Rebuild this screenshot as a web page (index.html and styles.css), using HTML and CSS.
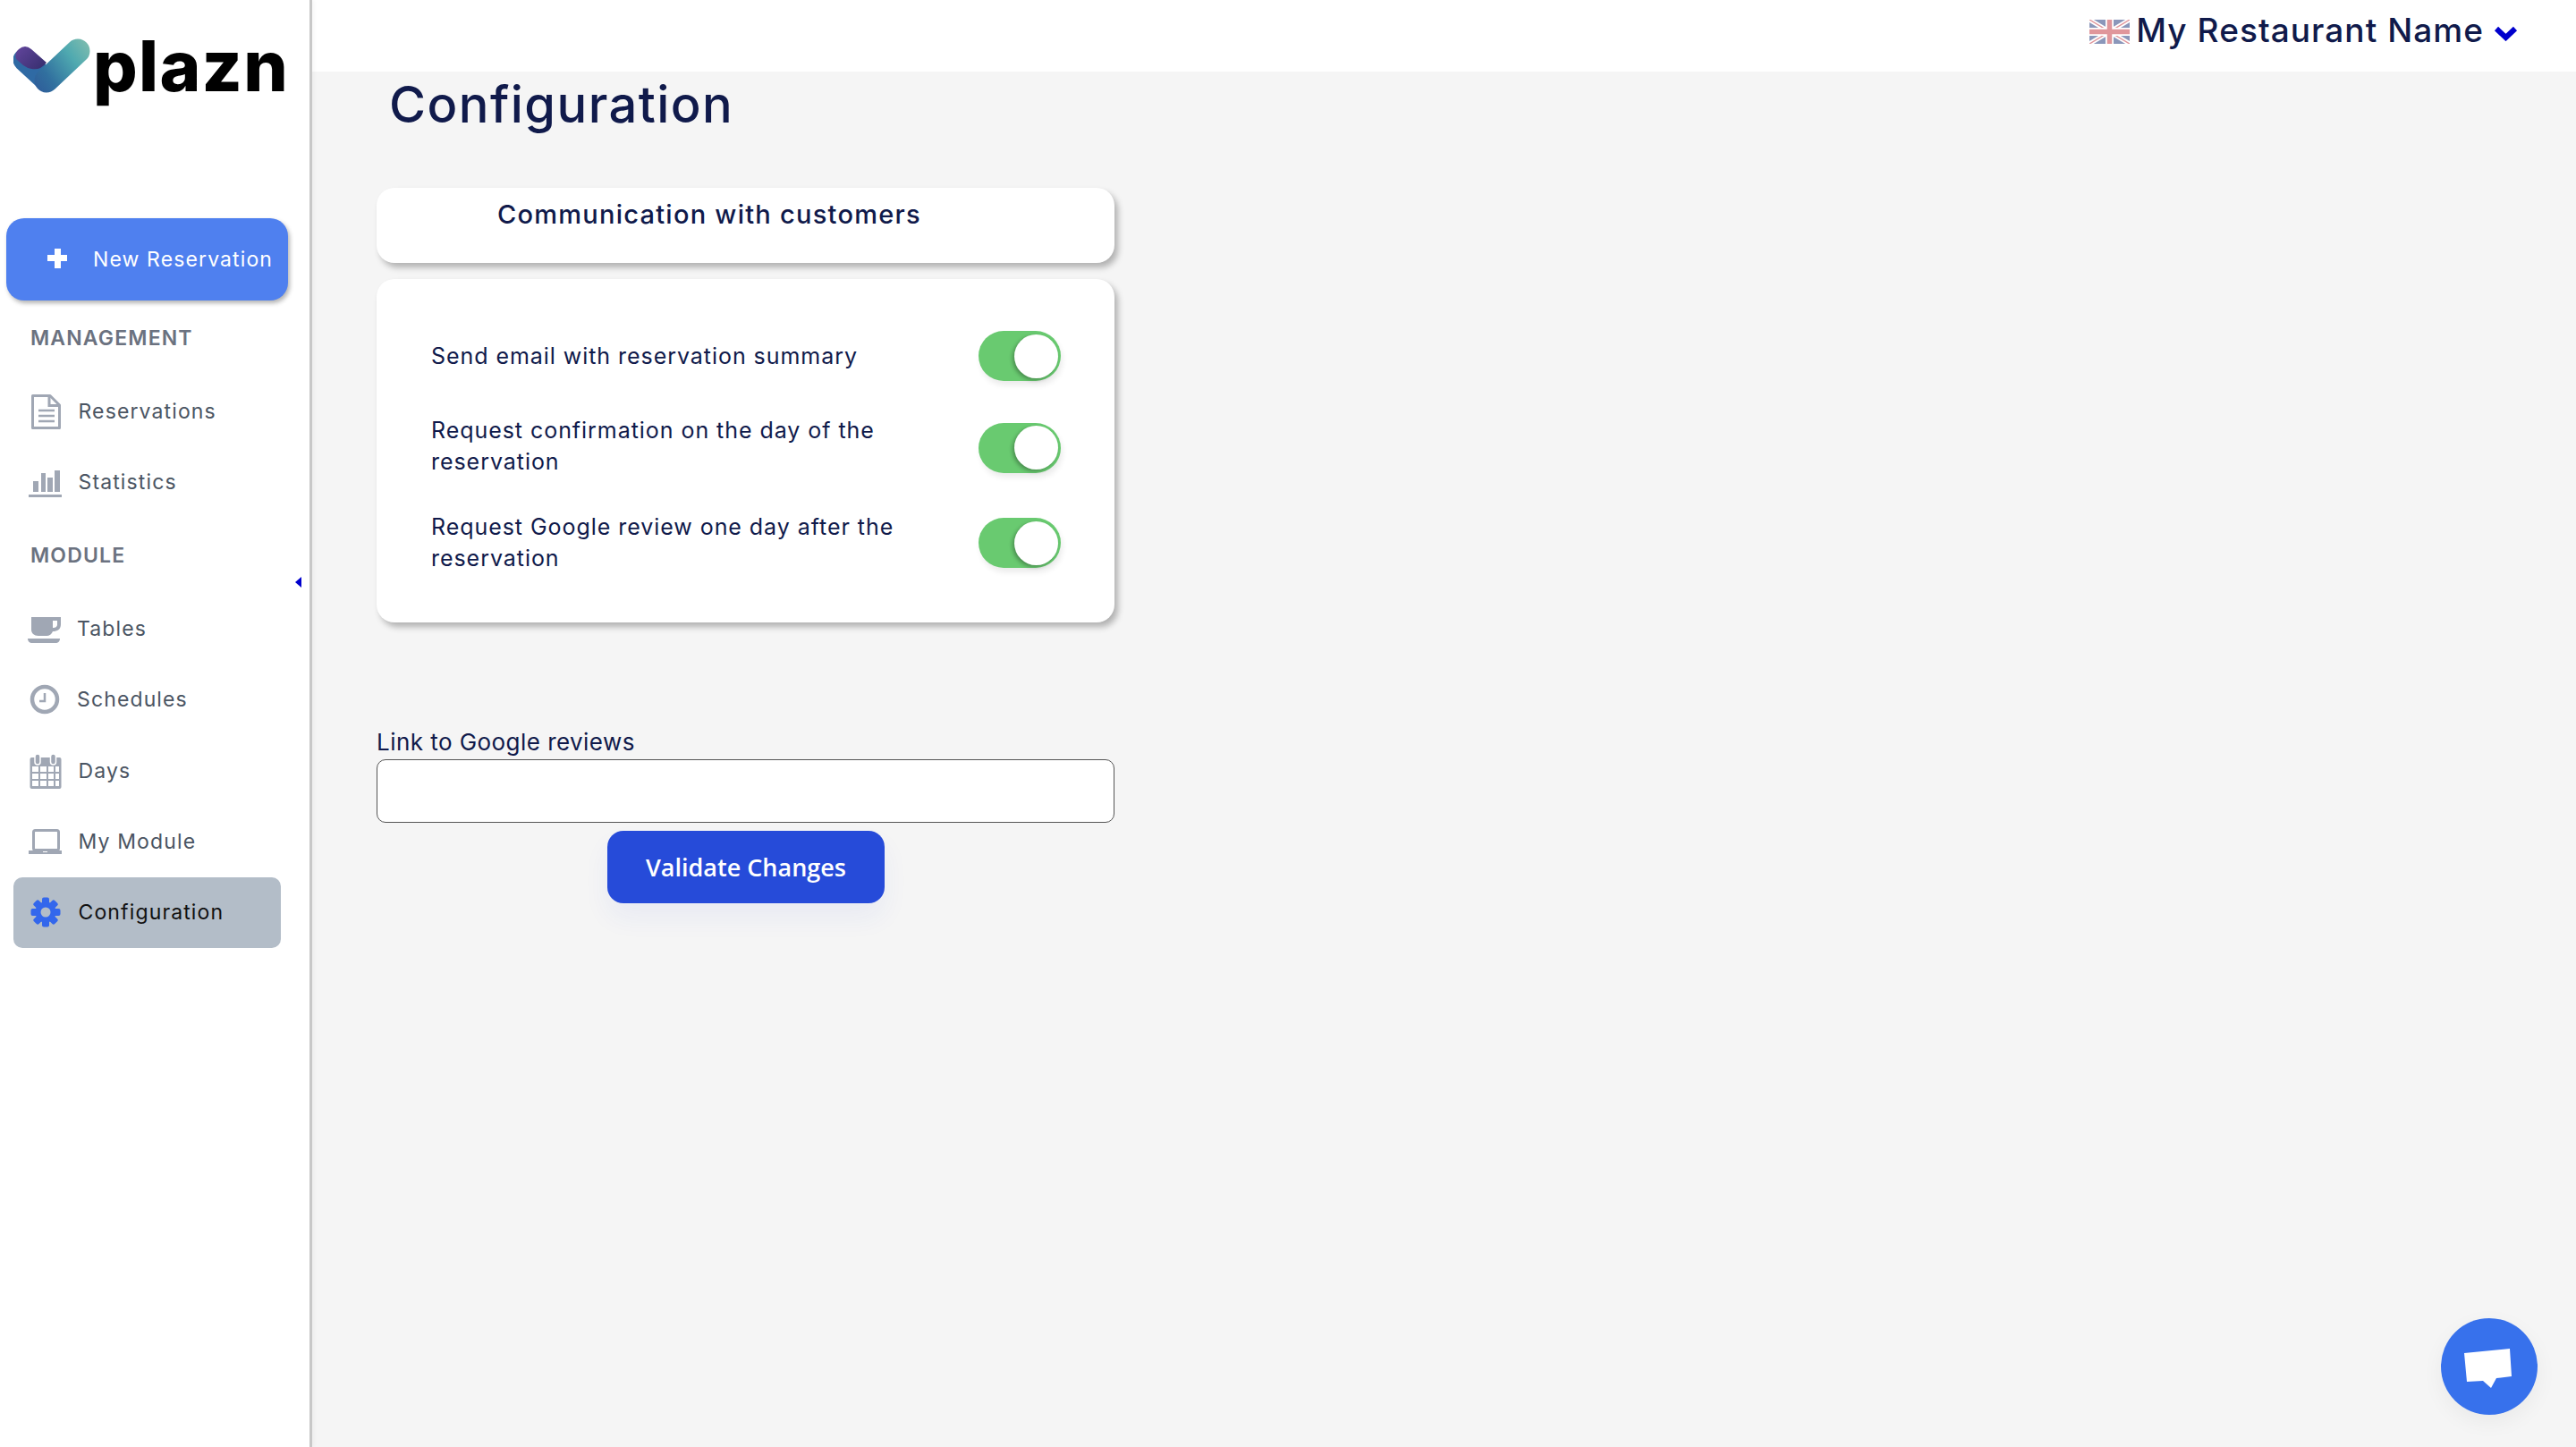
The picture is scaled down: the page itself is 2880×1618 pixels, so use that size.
FILE: index.html
```html
<!DOCTYPE html>
<html lang="en">
<head>
<meta charset="utf-8">
<title>Configuration</title>
<link rel="stylesheet" href="styles.css">
</head>
<body>
<div class="app">
  <aside class="sidebar">
    <div class="brand">
      <svg class="brand-mark" width="92" height="64" viewBox="0 0 92 64">
        <defs>
          <linearGradient id="armR" x1="10" y1="60" x2="88" y2="4" gradientUnits="userSpaceOnUse">
            <stop offset="0" stop-color="#2d4f96"/><stop offset=".35" stop-color="#31709f"/><stop offset=".7" stop-color="#4fa9b0"/><stop offset="1" stop-color="#84bfae"/>
          </linearGradient>
          <linearGradient id="armL" x1="6" y1="14" x2="40" y2="46" gradientUnits="userSpaceOnUse">
            <stop offset="0" stop-color="#5c4296"/><stop offset="1" stop-color="#29275f"/>
          </linearGradient>
        </defs>
        <path d="M12 24 L37 47" stroke="#2f6aa4" stroke-width="25" stroke-linecap="round" fill="none"/>
        <path d="M37 47 L72 14" stroke="url(#armR)" stroke-width="27" stroke-linecap="round" fill="none"/>
        <path d="M3 23 Q1 16 6 12 Q13 6 20 12 L37 27 Q30 36 20 34 Q15 33 11 30 Z" fill="url(#armL)"/>
      </svg>
      <span class="brand-name">plazn</span>
    </div>
    <button class="new-btn"><span class="new-plus"></span><span class="new-label">New Reservation</span></button>

    <div class="section">MANAGEMENT</div>
    <a class="item">
      <svg class="ico" width="42" height="42" viewBox="0 0 42 42"><path d="M6.500 3.500H26L36.500 14V39.500H6.500Z" fill="none" stroke="#a0a7b4" stroke-width="3" stroke-linejoin="round"/><path d="M25 3.500V14.500H36.500" fill="none" stroke="#a0a7b4" stroke-width="3"/><path d="M13 20H31M13 26H31M13 32H31" stroke="#a0a7b4" stroke-width="2.500"/></svg>
      <span>Reservations</span>
    </a>
    <a class="item">
      <svg class="ico" width="42" height="42" viewBox="0 0 42 42"><path d="M7 20h6v12H7zM16 11h5v21h-5zM23 16h6v16h-6zM31 8h6v24h-6z" fill="#a0a7b4"/><path d="M2 36.500H39" stroke="#a0a7b4" stroke-width="3"/></svg>
      <span>Statistics</span>
    </a>

    <div class="section section-module">MODULE</div>
    <span class="collapse"></span>
    <a class="item item-tight">
      <svg class="ico" width="42" height="42" viewBox="0 0 42 42"><path d="M5 8H38V16C38 22 34 24 29 24C28 27 25 29 22 29H13C8 29 5 26 5 22Z" fill="#a0a7b4"/><path d="M29 12h5v4c0 3-2 4-5 4Z" fill="#fff"/><path d="M1 32H37C37 35 35 37 32 37H6C3 37 1 35 1 32Z" fill="#a0a7b4"/></svg>
      <span>Tables</span>
    </a>
    <a class="item item-tight">
      <svg class="ico" width="42" height="42" viewBox="0 0 42 42"><circle cx="20" cy="21" r="14" fill="none" stroke="#a0a7b4" stroke-width="4.500"/><path d="M20 14V23H14" fill="none" stroke="#a0a7b4" stroke-width="2.500"/></svg>
      <span>Schedules</span>
    </a>
    <a class="item">
      <svg class="ico" width="42" height="42" viewBox="0 0 42 42"><rect x="3.500" y="6" width="35" height="35" rx="2" fill="#a0a7b4"/><path d="M6 16h7v6H6zM15 16h7v6h-7zM24 16h6v6h-6zM32 16h4v6h-4zM6 24h7v6H6zM15 24h7v6h-7zM24 24h6v6h-6zM32 24h4v6h-4zM6 32h7v6H6zM15 32h7v6h-7zM24 32h6v6h-6zM32 32h4v6h-4z" fill="#fff"/><rect x="9" y="2" width="6" height="12" rx="3" fill="#a0a7b4" stroke="#fff" stroke-width="1.500"/><rect x="26.500" y="2" width="6" height="12" rx="3" fill="#a0a7b4" stroke="#fff" stroke-width="1.500"/></svg>
      <span>Days</span>
    </a>
    <a class="item">
      <svg class="ico" width="42" height="42" viewBox="0 0 42 42"><rect x="7.500" y="8.500" width="28" height="22" rx="2" fill="none" stroke="#a0a7b4" stroke-width="3"/><path d="M2 31H39V35H2Z" fill="#a0a7b4"/><path d="M18 32.500h5" stroke="#fff" stroke-width="1"/></svg>
      <span>My Module</span>
    </a>
    <a class="item item-active">
      <svg class="ico" width="42" height="42" viewBox="0 0 42 42">
        <g fill="#3367ec" transform="translate(21 21)">
          <circle r="11.500"/>
          <rect x="-4" y="-16.500" width="8" height="33" rx="2"/>
          <rect x="-4" y="-16.500" width="8" height="33" rx="2" transform="rotate(45)"/>
          <rect x="-4" y="-16.500" width="8" height="33" rx="2" transform="rotate(90)"/>
          <rect x="-4" y="-16.500" width="8" height="33" rx="2" transform="rotate(135)"/>
        </g>
        <circle cx="21" cy="21" r="5.500" fill="#b3bdc8"/>
      </svg>
      <span>Configuration</span>
    </a>
  </aside>

  <div class="main">
    <header class="topbar">
      <svg class="flag" width="45" height="27" viewBox="0 0 45 27">
        <rect width="45" height="27" fill="#8b97ba"/>
        <path d="M0 0L45 27M45 0L0 27" stroke="#fff" stroke-width="5"/>
        <path d="M0 0L45 27M45 0L0 27" stroke="#e0969b" stroke-width="1.500"/>
        <path d="M22.500 0V27M0 13.500H45" stroke="#fff" stroke-width="9"/>
        <path d="M22.500 0V27M0 13.500H45" stroke="#e0969b" stroke-width="5.500"/>
      </svg>
      <span class="restaurant">My Restaurant Name</span>
      <svg class="chev" width="27" height="18" viewBox="0 0 27 18"><path d="M3 4L13.500 14L24 4" fill="none" stroke="#0000cd" stroke-width="6"/></svg>
    </header>

    <main class="content">
      <h1 class="title">Configuration</h1>
      <div class="card card-head"><h2>Communication with customers</h2></div>
      <div class="card card-body">
        <div class="row">
          <span>Send email with reservation summary</span>
          <span class="toggle"><span class="knob"></span></span>
        </div>
        <div class="row">
          <span>Request confirmation on the day of the<br>reservation</span>
          <span class="toggle toggle-low"><span class="knob"></span></span>
        </div>
        <div class="row">
          <span>Request Google review one day after the<br>reservation</span>
          <span class="toggle"><span class="knob"></span></span>
        </div>
      </div>
      <label class="field-label" for="link">Link to Google reviews</label>
      <input class="field" id="link" type="text">
      <button class="validate">Validate Changes</button>
    </main>
  </div>
</div>
<div class="chat">
  <svg width="108" height="108" viewBox="0 0 108 108"><path d="M26 39L77 34L79 65L62 67L56 78L47 70L29 71Z" fill="#fff"/></svg>
</div>
</body>
</html>
```
FILE: styles.css
```css
* { box-sizing: border-box; }
html, body { margin: 0; height: 1618px; overflow: hidden; }
body { background: #f5f5f5; font-family: Inter, "Liberation Sans", sans-serif; color: #101a4b; position: relative; }
.app { display: flex; height: 1618px; }

.sidebar { width: 349px; flex: none; background: #fff; border-right: 3px solid #c8c8c8; position: relative; box-shadow: 2px 0 4px rgba(0,0,0,.04); display: flex; flex-direction: column; }
.brand { height: 244px; display: flex; align-items: flex-start; padding: 43px 0 0 15px; }
.brand-mark { flex: none; }
.brand-name { font-size: 78px; font-weight: 800; line-height: 72px; color: #000; margin: -5px 0 0 -3px; letter-spacing: 1.300px; }

.new-btn { margin-left: 7px; width: 315px; height: 92px; flex: none; background: #4f80ef; color: #fff; border: 0; border-radius: 20px; box-shadow: 2px 3px 5px rgba(0,0,0,.3); display: flex; align-items: center; padding: 0 0 0 46px; font: inherit; }
.new-plus { width: 22px; height: 22px; flex: none; background: linear-gradient(#fff,#fff) center/7px 100% no-repeat, linear-gradient(#fff,#fff) center/100% 7px no-repeat; border-radius: 3px; margin: 0 29px 3px 0; }
.new-label { font-size: 23px; letter-spacing: 1.120px; white-space: nowrap; }

.section { height: 84px; flex: none; display: flex; align-items: center; padding-left: 34px; font-size: 23px; font-weight: 600; letter-spacing: 1.150px; color: #6b7280; }
.section-module { height: 85px; }

.item { height: 79.250px; flex: none; margin: 0 32px 0 15px; padding-left: 15px; display: flex; align-items: center; gap: 15.500px; font-size: 23px; letter-spacing: 1.130px; color: #4b5563; border-radius: 10px; }
.item-tight { gap: 14px; }
.ico { flex: none; }
.item-active { background: #b3bdc8; color: #111; }
.collapse { position: absolute; left: 330px; top: 645px; border-style: solid; border-width: 6px 7px 6px 0; border-color: transparent #0000cd transparent transparent; }

.main { flex: 1; min-width: 0; display: flex; flex-direction: column; }
.topbar { height: 80px; flex: none; background: #fff; display: flex; align-items: center; padding: 0 65px 13px 0; justify-content: flex-end; }
.flag { margin: 4px 7px 0 0; }
.restaurant { font-size: 37px; font-weight: 500; letter-spacing: 1.050px; color: #101a4b; margin-right: 11px; white-space: nowrap; }
.chev { margin-top: 7px; }

.content { width: 825px; margin-left: 72px; display: flex; flex-direction: column; }
.title { margin: 0 0 0 14px; height: 130px; padding-top: 2px; font-size: 56px; line-height: 70px; font-weight: 500; letter-spacing: 1.450px; color: #101a4b; }

.card { background: #fff; border-radius: 20px; box-shadow: 4px 5px 7px rgba(0,0,0,.28); }
.card-head { height: 84px; padding: 11px 0 0 135px; }
.card-head h2 { margin: 0; font-size: 29px; line-height: 38px; font-weight: 500; letter-spacing: 1.250px; color: #101a4b; }
.card-body { margin-top: 18px; height: 384px; padding: 58px 60px 0 61px; display: flex; flex-direction: column; gap: 38px; }
.row { display: flex; justify-content: space-between; align-items: center; font-size: 25px; line-height: 35px; letter-spacing: .950px; color: #101a4b; font-weight: 400; }
.toggle { width: 92px; height: 56px; flex: none; border-radius: 28px; background: #69ca70; display: flex; align-items: center; justify-content: flex-end; padding-right: 3px; box-shadow: 2px 5px 6px rgba(0,0,0,.08); }
.toggle-low { margin-top: 3px; }
.knob { width: 49px; height: 49px; border-radius: 50%; background: #fff; box-shadow: -2px 2px 4px rgba(0,0,0,.3); }

.field-label { margin-top: 118px; height: 35px; font-size: 26px; line-height: 32px; color: #101a4b; letter-spacing: .45px; }
.field { height: 71px; background: #fff; border: 1.500px solid #555; border-radius: 10px; display: block; width: 100%; }
.validate { align-self: flex-start; margin: 9px 0 0 258px; width: 310px; height: 81px; border: 0; border-radius: 18px; background: #264bd9; color: #fff; font-family: "Open Sans", sans-serif; font-size: 27px; font-weight: 600; box-shadow: 0 16px 30px rgba(38,75,217,.06); }

.chat { position: absolute; left: 2729px; top: 1474px; width: 108px; height: 108px; border-radius: 50%; background: #3771ec; box-shadow: 0 8px 24px rgba(0,0,0,.05); }
.chat svg { display: block; }
```
